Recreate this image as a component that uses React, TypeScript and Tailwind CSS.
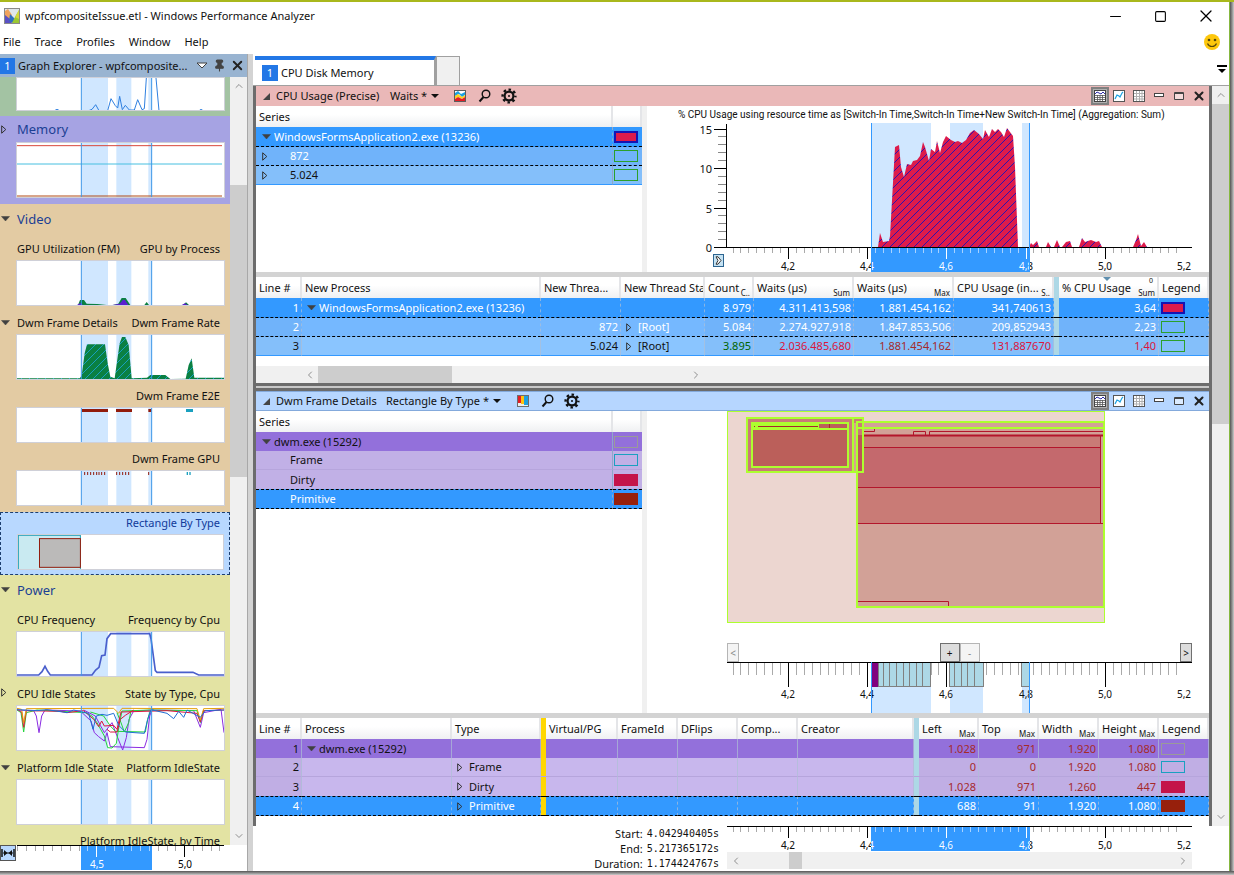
import type { ReactNode } from 'react';
import { ChevronDown, ChevronLeft, ChevronRight, ChevronUp, Minus, Pin, Square, X } from 'lucide-react';

type Point = [number, number];

const toPoints = (points: Point[]) => points.map((p) => p.join(',')).join(' ');

/* ---------- small drawings ---------- */

function AppLogo() {
  return (
    <svg width="16" height="16" viewBox="0 0 16 16">
      <rect width="16" height="16" fill="#8a8a8a" />
      <rect x="1" y="1" width="14" height="14" fill="#dfe6ea" />
      <path d="M1 3l3-2 4 6-3 6-4-5z" fill="#f0a35c" />
      <path d="M1 7l5 4 2 4H1z" fill="#5a4fc4" />
      <path d="M6 6l5 5-2 4-4-2z" fill="#2f6fc0" />
      <path d="M15 2v13H8l3-6z" fill="#9bc832" />
      <path d="M15 2l-4 7 4 2z" fill="#d3d83c" />
    </svg>
  );
}

function Smiley() {
  return (
    <svg width="16" height="16" viewBox="0 0 16 16">
      <circle cx="8" cy="8" r="8" fill="#fdc70c" />
      <circle cx="5" cy="6" r="1.3" fill="#55460a" />
      <circle cx="11" cy="6" r="1.3" fill="#55460a" />
      <path d="M3.5 9.500c1.800 4 7.200 4 9 0" fill="none" stroke="#55460a" strokeWidth="1.2" />
    </svg>
  );
}

function Expander({ open }: { open: boolean }) {
  return open ? (
    <svg width="9" height="6" viewBox="0 0 9 6" className="shrink-0">
      <path d="M0.500 0.500h8L4.500 5z" fill="#404040" stroke="#404040" strokeWidth="0.500" />
    </svg>
  ) : (
    <svg width="6" height="9" viewBox="0 0 6 9" className="shrink-0">
      <path d="M0.700 0.800v7.400L4.800 4.500z" fill="none" stroke="#303030" />
    </svg>
  );
}

function SearchIcon() {
  return (
    <svg width="14" height="14" viewBox="0 0 14 14" fill="none" stroke="#111">
      <circle cx="8" cy="5" r="3.800" strokeWidth="1.400" />
      <path d="M5.500 8L1.500 12.500" strokeWidth="2" />
    </svg>
  );
}

function GearIcon() {
  return (
    <svg width="16" height="16" viewBox="0 0 16 16" fill="none" stroke="#111">
      <circle cx="8" cy="8" r="4.400" strokeWidth="2.200" />
      <circle cx="8" cy="8" r="6.400" strokeWidth="2.400" strokeDasharray="2.500 2.526" strokeDashoffset="1.250" />
      <circle cx="8" cy="8" r="1" fill="#111" stroke="none" />
    </svg>
  );
}

function GraphPresetIcon() {
  return (
    <svg width="12" height="12" viewBox="0 0 12 12">
      <rect width="12" height="12" fill="#5c5c5c" />
      <rect x="1" y="1" width="10" height="10" fill="#fff" />
      <path d="M1 3l3-2 3 3 2-1 2-1v3L8 7 5 4 1 6z" fill="#1ba1e2" />
      <path d="M1 6l3-2 4 3 3-2v2L8 9 4 7 1 9z" fill="#ffd21c" />
      <path d="M1 9l3-2 4 2 3-2v4H1z" fill="#e51c24" />
    </svg>
  );
}

function BarPresetIcon() {
  return (
    <svg width="12" height="12" viewBox="0 0 12 12">
      <rect width="12" height="12" fill="#6d6d6d" />
      <rect x="1" y="1" width="10" height="10" fill="#eee" />
      <rect x="1" y="1" width="3" height="7" fill="#e51c24" />
      <rect x="4" y="1" width="3" height="8" fill="#ffc20e" />
      <rect x="7" y="1" width="4" height="9" fill="#1ba1e2" />
    </svg>
  );
}

function ChartTableIcon() {
  return (
    <svg width="12" height="12" viewBox="0 0 12 12">
      <rect x="0.500" y="0.500" width="11" height="11" fill="#fff" stroke="#444" />
      <path d="M1 4l2-2 2 1 2 1 2-2 2 2" fill="none" stroke="#2c2ca8" />
      <path d="M1 5.500h10M1 7.500h10M1 9.500h10M3.500 5v6M6 5v6M8.500 5v6" stroke="#555" strokeWidth="0.800" />
    </svg>
  );
}

function ChartIcon() {
  return (
    <svg width="12" height="12" viewBox="0 0 12 12">
      <rect x="0.500" y="0.500" width="11" height="11" fill="#fff" stroke="#555" />
      <path d="M2 9l2-4 2 1 1 1 2-4 1-1" fill="none" stroke="#1ba1e2" strokeWidth="1.200" />
    </svg>
  );
}

function TableIcon() {
  return (
    <svg width="12" height="12" viewBox="0 0 12 12">
      <rect x="0.500" y="0.500" width="11" height="11" fill="#fff" stroke="#555" />
      <path d="M1 3.500h10M1 6.500h10M1 9h10M3.500 1v10M6.500 1v10M9 1v10" stroke="#b0b0b0" />
    </svg>
  );
}

/* ---------- scroll bars ---------- */

function VerticalScroll({ lead, thumb }: { lead: string; thumb: string }) {
  return (
    <div className="flex w-[17px] shrink-0 flex-col items-center bg-[#f0f0f0] text-[#8f8f8f]">
      <ChevronUp size={12} className="my-[3px] shrink-0" />
      <div className={lead} />
      <div className={`w-full shrink-0 bg-[#cdcdcd] ${thumb}`} />
      <div className="flex-1" />
      <ChevronDown size={12} className="my-[3px] shrink-0" />
    </div>
  );
}

/* ---------- left panel ---------- */

function Thumb({ h, bands = true, children }: { h: number; bands?: boolean; children?: ReactNode }) {
  return (
    <div className="ml-4 mr-[5px] border border-[#cfd0d8] bg-white">
      <svg viewBox={`0 0 621 ${(h - 2) * 3}`} className="block h-auto w-full">
        {bands && (
          <g fill="#d0e7ff">
            <rect x="195" width="78" height="200" />
            <rect x="298" width="45" height="200" />
            <rect x="394" width="10" height="200" />
          </g>
        )}
        {children}
        {bands && <path d="M193 0V200M404 0V200" stroke="#3c96e8" strokeWidth="3" />}
      </svg>
    </div>
  );
}

function GroupHeading({ open, children }: { open: boolean; children: ReactNode }) {
  return (
    <h2 className="relative flex h-[26px] items-center pl-[17px] text-[13px] text-[#1b3f94]">
      <span className="absolute left-[1px]">
        <Expander open={open} />
      </span>
      {children}
    </h2>
  );
}

function GraphLabel({ title, preset, open }: { title?: string; preset: string; open?: boolean }) {
  return (
    <div
      className={`relative flex items-end justify-between whitespace-nowrap pb-[3px] pl-[17px] pr-[10px] leading-4 ${
        title ? 'h-7' : 'h-[27px]'
      }`}
    >
      {open !== undefined && (
        <span className="absolute bottom-2 left-[1px]">
          <Expander open={open} />
        </span>
      )}
      <span>{title}</span>
      <span>{preset}</span>
    </div>
  );
}

const idleStates: { color: string; points: Point[] }[] = [
  { color: '#8a2be2', points: [[0, 12], [50, 14], [58, 30], [66, 80], [74, 30], [84, 12], [190, 15], [222, 45], [232, 80], [245, 92], [262, 105], [270, 80], [280, 122], [382, 125], [390, 100], [398, 30], [405, 12], [530, 14], [550, 64], [560, 20], [612, 10], [621, 80]] },
  { color: '#8a2be2', points: [[200, 12], [235, 30], [250, 58], [262, 80], [285, 50], [300, 90], [317, 132], [328, 95], [336, 40], [350, 15], [410, 12]] },
  { color: '#24d63c', points: [[0, 12], [12, 20], [20, 78], [28, 20], [60, 12], [205, 20], [225, 30], [240, 50], [262, 90], [272, 125], [285, 126], [298, 112], [306, 60], [315, 15], [400, 12], [540, 14], [550, 50], [560, 12]] },
  { color: '#24d63c', points: [[220, 18], [260, 30], [280, 60], [295, 76], [385, 78], [392, 40], [400, 14]] },
  { color: '#24d63c', points: [[300, 20], [312, 50], [322, 78], [335, 50], [342, 14]] },
  { color: '#dc143c', points: [[0, 10], [14, 18], [20, 64], [28, 14], [130, 16], [150, 20], [200, 14], [230, 40], [245, 62], [254, 45], [262, 60], [290, 58], [300, 70], [312, 18], [450, 14], [540, 22], [550, 48], [560, 14], [621, 12]] },
  { color: '#dc143c', points: [[270, 70], [280, 78], [300, 78], [310, 40], [325, 28], [350, 12]] },
  { color: '#e3a008', points: [[0, 7], [14, 10], [20, 50], [28, 8], [290, 7], [305, 22], [315, 7], [540, 8], [550, 42], [560, 8], [621, 7]] },
  { color: '#1f6fd4', points: [[0, 11], [60, 14], [90, 11], [150, 20], [170, 12], [215, 22], [228, 70], [238, 30], [255, 25], [270, 28], [290, 22], [305, 58], [325, 78], [382, 82], [392, 40], [402, 11], [450, 22], [470, 38], [485, 16], [500, 34], [510, 12], [550, 34], [565, 14], [621, 12]] },
];

function GraphExplorer() {
  return (
    <aside className="flex w-[247px] shrink-0 flex-col">
      <div className="flex h-[23px] shrink-0 items-center bg-[#99b4d1]">
        <span className="flex h-4 w-[15px] items-center justify-center bg-[#2277e6] text-white">1</span>
        <span className="ml-[3px] w-[178px] whitespace-nowrap">Graph Explorer - wpfcomposite...</span>
        <button aria-label="Panel menu" className="w-[17px]">
          <svg width="12" height="7" viewBox="0 0 12 7">
            <path d="M1 1h10L6 6z" fill="#fff" stroke="#404040" />
          </svg>
        </button>
        <button aria-label="Pin panel" className="w-[17px]">
          <Pin size={13} fill="#444" color="#444" />
        </button>
        <button aria-label="Close panel">
          <X size={15} color="#222" strokeWidth={3} />
        </button>
      </div>

      <div className="flex h-0 grow overflow-hidden">
        <div className="min-w-0 flex-1 overflow-hidden">
          <section className="bg-[#a3c3a3] pb-[5px]">
            <Thumb h={34}>
              <polyline
                points="0,110 110,99 120,94 130,99 215,98 225,94 236,80 246,98 272,98 282,62 295,83 302,90 308,55 316,95 325,82 337,96 352,96 362,65 375,95 382,92 388,0"
                fill="none"
                stroke="#2f80e0"
                strokeWidth="3"
              />
              <polyline points="417,0 426,98 545,99 552,94 560,99" fill="none" stroke="#2f80e0" strokeWidth="3" />
            </Thumb>
          </section>

          <section className="bg-[#a6a3e3] pb-[6px]">
            <GroupHeading open={false}>Memory</GroupHeading>
            <Thumb h={56}>
              <path d="M0 8H615" stroke="#d9483b" strokeWidth="3" />
              <path d="M0 63H615" stroke="#46bfe0" strokeWidth="3" />
              <path d="M0 159H615" stroke="#b04a14" strokeWidth="3" />
            </Thumb>
          </section>

          <section className="bg-[#e3cba3] pb-[6px] pt-[2px]">
            <GroupHeading open>Video</GroupHeading>
            <GraphLabel title="GPU Utilization (FM)" preset="GPU by Process" />
            <Thumb h={46}>
              <path d="M183 132l6-15h12l8 11 32 1 28 3zM288 132l16-4 10-17h12l14 21zM382 132l7-9 7 9zM498 132l9-8 9 8z" fill="#0a8043" />
              <path d="M180 132l10-6 8 6zM286 132l22-4 10-12 6 1 10 15zM494 132l10-5 8 5z" fill="#5a1fd0" />
            </Thumb>
            <GraphLabel title="Dwm Frame Details" preset="Dwm Frame Rate" open />
            <Thumb h={46}>
              <defs>
                <pattern id="hatch-teal" width="24" height="24" patternUnits="userSpaceOnUse">
                  <rect width="24" height="24" fill="#0a8043" />
                  <path d="M0 24L24 0" stroke="#18a0c0" strokeWidth="3" />
                </pattern>
              </defs>
              <polygon
                points="0,132 0,130 188,130 194,122 203,55 210,28 264,28 272,85 280,125 293,130 300,80 308,25 315,6 325,6 335,30 344,130 390,128 400,120 445,120 460,132 506,131 515,90 524,70 532,128 621,128 621,132"
                fill="url(#hatch-teal)"
              />
            </Thumb>
            <GraphLabel preset="Dwm Frame E2E" />
            <Thumb h={36}>
              <path d="M195 3h78v9h-78zM297 3h48v9h-48zM394 3h9v9h-9z" fill="#921c0c" />
              <rect x="507" y="3" width="21" height="9" fill="#1aa0bf" />
            </Thumb>
            <GraphLabel preset="Dwm Frame GPU" />
            <Thumb h={36}>
              <path
                d="M203 3v9M212 3v9M221 3v9M230 3v9M239 3v9M246 3v9M254 3v9M263 3v9M299 3v9M308 3v9M317 3v9M326 3v9M335 3v9M395 3v9"
                stroke="#921c0c"
                strokeWidth="3"
              />
              <path d="M511 3v9M519 3v9" stroke="#1aa0bf" strokeWidth="4" />
            </Thumb>
          </section>

          <section className="border border-dashed border-[#1d3f70] bg-[#b8d8ff] pb-1">
            <div className="h-[21px] pr-[9px] text-right leading-5 text-[#103a9a]">Rectangle By Type</div>
            <Thumb h={36} bands={false}>
              <rect x="1" y="1" width="188" height="104" fill="#c9eaf1" stroke="#22a0b8" strokeWidth="3" />
              <rect x="65" y="11" width="124" height="87" fill="#bbbab9" stroke="#921c0c" strokeWidth="3" />
            </Thumb>
          </section>

          <section className="bg-[#e3e3a3] pt-[2px]">
            <GroupHeading open>Power</GroupHeading>
            <GraphLabel title="CPU Frequency" preset="Frequency by Cpu" />
            <Thumb h={46}>
              <polyline
                points="0,129 65,129 75,119 84,103 92,118 100,129 225,129 236,114 246,106 254,71 264,69 270,20 281,5 398,5 402,20 415,116 420,121 528,121 545,129 621,129"
                fill="none"
                stroke="#4a5fcc"
                strokeWidth="5"
              />
            </Thumb>
            <GraphLabel title="CPU Idle States" preset="State by Type, Cpu" open={false} />
            <Thumb h={46}>
              {idleStates.map((state, i) => (
                <polyline key={i} points={toPoints(state.points)} fill="none" stroke={state.color} strokeWidth="3" />
              ))}
            </Thumb>
            <GraphLabel title="Platform Idle State" preset="Platform IdleState" open />
            <Thumb h={46} />
            <GraphLabel preset="Platform IdleState, by Time" />
          </section>
        </div>
        <VerticalScroll lead="h-[90px] shrink-0" thumb="h-[292px]" />
      </div>

      <div className="flex h-[26px] shrink-0 items-start">
        <button aria-label="Fit timeline" className="h-4 w-4 border border-[#555] bg-[#b8d8ff]">
          <svg viewBox="0 0 14 14" className="block w-full">
            <path d="M1 3v8M13 3v8" stroke="#111" strokeWidth="1.500" />
            <path d="M2 7h10" stroke="#111" />
            <path d="M3 4l3.500 3L3 10zM11 4L7.500 7l3.500 3z" fill="#111" />
          </svg>
        </button>
        <svg viewBox="0 0 231 26" className="block w-[231px]">
          <rect x="65" width="71" height="25" fill="#3399ff" />
          {Array.from({ length: 24 }, (_, i) => {
            const x = Math.round(1 + i * 8.8) + 0.5;
            const major = i === 9 || i === 19;
            const selected = x > 65 && x < 136;
            return (
              <path
                key={i}
                d={`M${x} 0V${major ? 12 : 6}`}
                stroke={selected ? (major ? '#fff' : '#a8d2ff') : major ? '#000' : '#aaa'}
              />
            );
          })}
          <path d="M1 0.500H208" stroke="#000" />
          <text x="81" y="23" fontSize="10" fill="#fff" textAnchor="middle">4,5</text>
          <text x="169" y="23" fontSize="10" textAnchor="middle">5,0</text>
        </svg>
      </div>
    </aside>
  );
}

/* ---------- right side: headers and tables ---------- */

function PanelHeader({
  title,
  titleWidth,
  preset,
  presetWidth,
  icon,
  className,
}: {
  title: string;
  titleWidth: string;
  preset: string;
  presetWidth: string;
  icon: ReactNode;
  className: string;
}) {
  return (
    <div className={`flex h-5 items-center ${className}`}>
      <button aria-label="Collapse panel" className="w-5 pl-[7px]">
        <svg width="7" height="7" viewBox="0 0 7 7">
          <path d="M7 0v7H0z" fill="#444" />
        </svg>
      </button>
      <h3 className={`whitespace-nowrap ${titleWidth}`}>{title}</h3>
      <button className={`flex items-center gap-1 whitespace-nowrap text-left ${presetWidth}`}>
        {preset}
        <svg width="8" height="4" viewBox="0 0 8 4">
          <path d="M0 0h8L4 4z" fill="#111" />
        </svg>
      </button>
      <button aria-label="Graph type" className="flex w-6 justify-center">{icon}</button>
      <button aria-label="Search" className="flex w-[26px] justify-center">
        <SearchIcon />
      </button>
      <button aria-label="View editor" className="flex w-[22px] justify-center">
        <GearIcon />
      </button>
      <div className="ml-auto flex">
        <button aria-label="Graph and table" className="flex h-[18px] w-[18px] items-center justify-center border-2 border-[#808080] bg-[#b0b0b0]">
          <ChartTableIcon />
        </button>
        <button aria-label="Graph only" className="flex w-5 items-center justify-center">
          <ChartIcon />
        </button>
        <button aria-label="Table only" className="flex w-5 items-center justify-center">
          <TableIcon />
        </button>
        <button aria-label="Minimize panel" className="flex w-5 items-center justify-center">
          <svg width="12" height="12" viewBox="0 0 12 12">
            <rect x="1.500" y="3.500" width="9" height="3" fill="#fff" stroke="#444" />
          </svg>
        </button>
        <button aria-label="Maximize panel" className="flex w-5 items-center justify-center">
          <svg width="12" height="12" viewBox="0 0 12 12">
            <path d="M1.500 2.500h9v7h-9zM1.500 3.500h9" fill="#fff" fillOpacity="0.500" stroke="#444" />
          </svg>
        </button>
        <button aria-label="Close panel" className="flex w-5 items-center justify-center">
          <X size={14} color="#222" strokeWidth={3.5} />
        </button>
      </div>
    </div>
  );
}

const headCell =
  'overflow-hidden whitespace-nowrap border-r-2 border-[#e4e5e8] bg-linear-to-b from-white from-40% to-[#eff0f2] px-[3px] text-left font-normal';

const swatches = {
  exe: 'border-2 border-[#1414b4] bg-[#dc1b4c]',
  green: 'border border-[#2ba02b]',
  gray: 'border border-[#9a9a9a]',
  teal: 'border border-[#1aa0c0]',
  dirty: 'bg-[#c4144a]',
  primitive: 'bg-[#97200c]',
};

function Swatch({ kind }: { kind: keyof typeof swatches }) {
  return <div className={`h-3 w-6 ${swatches[kind]}`} />;
}

interface SeriesRow {
  label: string;
  depth: number;
  open?: boolean;
  swatch: keyof typeof swatches;
  className: string;
}

function SeriesTable({ rows }: { rows: SeriesRow[] }) {
  return (
    <div className="w-[391px] shrink-0 border-r-[5px] border-[#f0f0f0]">
      <table className="w-full table-fixed border-separate border-spacing-0">
        <colgroup>
          <col />
          <col className="w-[29px]" />
        </colgroup>
        <thead>
          <tr className="h-[21px]">
            <th className={headCell}>Series</th>
            <th aria-label="Color" className={headCell} />
          </tr>
        </thead>
        <tbody>
          {rows.map((row) => (
            <tr key={row.label} className={row.className}>
              <td className="border-r border-[#8fa8c8]">
                <div className="flex items-center pl-[6px]">
                  <span className="flex w-3 shrink-0">{row.open !== undefined && <Expander open={row.open} />}</span>
                  <span className={row.depth ? 'pl-4' : ''}>{row.label}</span>
                </div>
              </td>
              <td className="pl-px">
                <Swatch kind={row.swatch} />
              </td>
            </tr>
          ))}
        </tbody>
      </table>
    </div>
  );
}

interface Column {
  name: string;
  width: string;
  agg?: string;
  bar?: string;
  sorted?: boolean;
}

interface Cell {
  text?: string;
  open?: boolean;
  right?: boolean;
  className?: string;
  swatch?: keyof typeof swatches;
}

function DataTable({ columns, rows }: { columns: Column[]; rows: { className: string; cells: Cell[] }[] }) {
  return (
    <table className="w-full table-fixed border-separate border-spacing-0">
      <colgroup>
        {columns.map((column, i) => (
          <col key={i} className={column.width} />
        ))}
      </colgroup>
      <thead>
        <tr className="h-[21px]">
          {columns.map((column, i) =>
            column.bar ? (
              <th key={i} aria-label="Divider" className={column.bar} />
            ) : (
              <th key={i} className={`${headCell} relative ${column.sorted ? 'to-[#dcf1fb]' : ''}`}>
                {column.name}
                {column.agg && (
                  <span className="absolute bottom-0 right-[2px] text-[8px] leading-[10px]">{column.agg}</span>
                )}
                {column.sorted && (
                  <>
                    <span className="absolute right-1 top-0 text-[7px] leading-2">0</span>
                    <svg className="absolute left-11 top-0" width="8" height="4" viewBox="0 0 8 4">
                      <path d="M0 0h8L4 4z" fill="#5f8fae" />
                    </svg>
                  </>
                )}
              </th>
            ),
          )}
        </tr>
      </thead>
      <tbody>
        {rows.map((row, r) => (
          <tr key={r} className={row.className}>
            {row.cells.map((cell, i) => {
              if (columns[i].bar) return <td key={i} className={columns[i].bar} />;
              return (
                <td
                  key={i}
                  className={`overflow-hidden whitespace-nowrap border-r border-[#aebfd6]/70 px-[2px] ${
                    cell.right ? 'text-right' : ''
                  } ${cell.className ?? ''}`}
                >
                  {cell.open !== undefined ? (
                    <div className="flex items-center pl-[3px]">
                      <span className="flex w-3 shrink-0">
                        <Expander open={cell.open} />
                      </span>
                      {cell.text}
                    </div>
                  ) : cell.swatch ? (
                    <Swatch kind={cell.swatch} />
                  ) : (
                    cell.text
                  )}
                </td>
              );
            })}
          </tr>
        ))}
      </tbody>
    </table>
  );
}

/* ---------- right side: charts ---------- */

const MAJOR_LABELS = ['4,2', '4,4', '4,6', '4,8', '5,0', '5,2'];

function Ruler({ minor, major, selected }: { minor: number; major: number; selected: boolean }) {
  return (
    <g>
      {/* labels turn white exactly where the selection covers them */}
      <defs>
        <linearGradient id="ruler-ink" gradientUnits="userSpaceOnUse" x1="224" x2="383" y1="0" y2="0">
          <stop offset="0" stopColor="#111" />
          <stop offset="0" stopColor="#fff" />
          <stop offset="1" stopColor="#fff" />
          <stop offset="1" stopColor="#111" />
        </linearGradient>
      </defs>
      {selected && <rect x="224" width="159" height="25" fill="#3399ff" />}
      {Array.from({ length: 57 }, (_, i) => {
        const x = Math.round(85.500 + i * 7.920) + 0.5;
        const isMajor = i % 10 === 7;
        const inside = selected && x > 224 && x < 383;
        return (
          <path
            key={i}
            d={`M${x} 0V${isMajor ? major : minor}`}
            stroke={inside ? (isMajor ? '#fff' : '#a8d2ff') : isMajor ? '#000' : '#aaa'}
          />
        );
      })}
      <path d="M80 0.500H545" stroke="#000" />
      {MAJOR_LABELS.map((label, i) => (
        <text
          key={label}
          x={Math.round(141 + i * 79.200)}
          y={major + 11}
          fontSize="10"
          textAnchor="middle"
          fill={selected ? 'url(#ruler-ink)' : '#111'}
        >
          {label}
        </text>
      ))}
    </g>
  );
}

const usage: Point[] = [
  [231, 141], [233, 127], [236, 136], [242, 135], [243, 130], [248, 41], [252, 39], [254, 61], [257, 71], [260, 58],
  [264, 59], [266, 55], [270, 54], [273, 50], [276, 36], [278, 41], [282, 55], [284, 43], [288, 46], [290, 35],
  [293, 47], [296, 36], [299, 30], [304, 34], [308, 36], [311, 35], [315, 37], [319, 34], [323, 27], [327, 24],
  [332, 28], [336, 33], [338, 24], [342, 31], [345, 23], [348, 26], [351, 23], [354, 26], [357, 31], [360, 22],
  [363, 26], [366, 30], [368, 61], [371, 141], [382, 141], [384, 137], [386, 139], [390, 135], [392, 141],
  [399, 141], [401, 136], [404, 141], [407, 141], [410, 134], [413, 141], [415, 141], [419, 136], [423, 135],
  [425, 141], [432, 141], [435, 132], [438, 136], [444, 134], [449, 136], [452, 135], [455, 141], [486, 141],
  [489, 134], [491, 128], [494, 140], [497, 136], [500, 141],
];

function UsageChart() {
  return (
    <div className="relative min-w-0 flex-1">
      <svg viewBox="0 0 562 166" className="block w-full">
        <defs>
          <pattern id="hatch-blue" width="8" height="8" patternUnits="userSpaceOnUse">
            <rect width="8" height="8" fill="#dc1b4c" />
            <path d="M-1 1L1 -1M0 8L8 0M7 9L9 7" stroke="#2a12b0" />
          </pattern>
        </defs>
        <text x="31" y="12" fontSize="10" fill="#111" className="font-[Roboto,sans-serif]">
          % CPU Usage using resource time as [Switch-In Time,Switch-In Time+New Switch-In Time] (Aggregation: Sum)
        </text>
        <g fill="#d0e7ff">
          <rect x="224" y="17" width="60" height="124" />
          <rect x="303" y="17" width="33" height="124" />
          <rect x="375" y="17" width="8" height="124" />
        </g>
        <polygon points={toPoints(usage)} fill="url(#hatch-blue)" />
        {Array.from({ length: 16 }, (_, i) => {
          const y = Math.round(141 - i * 7.900) + 0.5;
          return i % 5 === 0 ? (
            <g key={i}>
              <path d={`M67 ${y}H80`} stroke="#000" />
              <text x="65" y={y + 4} fontSize="11" textAnchor="end" fill="#111">
                {i}
              </text>
            </g>
          ) : (
            <path key={i} d={`M71 ${y}H80`} stroke="#888" />
          );
        })}
        <path d="M79.500 18V141" stroke="#000" />
        <g transform="translate(0 141)">
          <Ruler minor={6} major={12} selected />
        </g>
        <path d="M224.500 17V166M382.500 17V166" stroke="#3399ff" />
      </svg>
      <button
        aria-label="Expand axis"
        className="absolute bottom-[5px] left-[66px] flex h-[13px] w-[11px] items-center justify-center border border-[#2c6490] bg-[#c5e2f3]"
      >
        <svg width="7" height="9" viewBox="0 0 7 9">
          <path d="M1 0.800h2L6 4.500 3 8.200H1l2-3.700z" fill="#fff" stroke="#333" />
        </svg>
      </button>
    </div>
  );
}

function RectangleChart() {
  const blocks = [231, 236, 242, 249, 256, 262, 269, 275];
  const blocks2 = [303, 308, 315, 321, 328];
  return (
    <div className="min-w-0 flex-1">
      <svg viewBox="0 0 562 232" className="block w-full">
        <rect x="80.500" y="0.500" width="377" height="211" fill="#ecd6d0" stroke="#adff2f" />
        {/* large window */}
        <rect x="210" y="12" width="247" height="183" fill="#d2a197" />
        <rect x="210.500" y="24.500" width="243" height="88" fill="#c97b76" stroke="#b3162b" />
        <rect x="210.500" y="36.500" width="243" height="40" fill="#c4696d" stroke="#b3162b" />
        <path d="M210 24.500H457" stroke="#b3162b" strokeWidth="2" />
        <path d="M453 112.500H457M211 20.500H227.500V18M266.500 24V20.500H278.500V24M282.500 24V20.500H457M211 190.500H301.500V195" fill="none" stroke="#b3162b" />
        {/* small window */}
        <rect x="100" y="7" width="115" height="54" fill="#c97b76" />
        <rect x="207" y="12" width="3" height="49" fill="#d9a08f" />
        <rect x="211" y="24" width="4" height="37" fill="#bb5358" />
        <rect x="105" y="13" width="96" height="43" fill="#bb5f5a" />
        <g fill="none" stroke="#adff2f" strokeWidth="2">
          <rect x="100" y="7" width="116" height="54" />
          <rect x="105" y="12" width="96" height="44" />
          <path d="M105 18H202M206 7V61M210 11H457V196H210ZM210 17H457" />
          <path d="M106 14.500H172" strokeWidth="5" />
        </g>
        <path d="M111 15.500H171M107 15.500H108M182.500 13V17" stroke="#a52a2a" />
      </svg>
      <div className="flex h-[19px] justify-between pl-20 pr-[17px] text-[10px] leading-4">
        <button disabled className="w-3 border border-[#b5b5b5] bg-[#f4f4f4] text-[#888]">&lt;</button>
        <div className="flex">
          <button className="w-5 border border-[#707070] bg-[#ddd]">+</button>
          <button disabled className="w-5 border border-[#b5b5b5] bg-[#f4f4f4] text-[#888]">-</button>
        </div>
        <button className="w-3 border border-[#707070] bg-[#ddd]">&gt;</button>
      </div>
      <svg viewBox="0 0 562 51" className="block w-full">
        <path d="M224 0h60v51h-60zM303 0h33v51h-33zM375 0h8v51h-8z" fill="#d0e7ff" />
        <Ruler minor={13} major={25} selected={false} />
        <g fill="#add8e6" stroke="#808080">
          {blocks.map((x, i) => (
            <rect key={x} x={x + 0.5} y="0" width={(blocks[i + 1] ?? 283) - x} height="24.500" />
          ))}
          {blocks2.map((x, i) => (
            <rect key={x} x={x - 0.5} y="0" width={(blocks2[i + 1] ?? 337) - x} height="24.500" />
          ))}
          <rect x="374.500" y="0" width="8" height="24.500" />
        </g>
        <rect x="224" width="7" height="25" fill="#800080" />
        <path d="M80 0.500H545" stroke="#000" />
        <path d="M224.500 0V51M382.500 0V51" stroke="#3399ff" />
      </svg>
    </div>
  );
}

/* ---------- data ---------- */

const cpuSeries: SeriesRow[] = [
  { label: 'WindowsFormsApplication2.exe (13236)', depth: 0, open: true, swatch: 'exe', className: 'h-5 bg-[#3399ff] text-white [&>td]:border-b [&>td]:border-dashed [&>td]:border-b-black' },
  { label: '872', depth: 1, open: false, swatch: 'green', className: 'h-[19px] bg-[#70b3fa] text-white [&>td]:border-b [&>td]:border-dashed [&>td]:border-b-black' },
  { label: '5.024', depth: 1, open: false, swatch: 'green', className: 'h-[19px] bg-[#84bffa] [&>td]:border-b [&>td]:border-b-[#3399ff]' },
];

const dwmSeries: SeriesRow[] = [
  { label: 'dwm.exe (15292)', depth: 0, open: true, swatch: 'gray', className: 'h-[19px] bg-[#9370db]' },
  { label: 'Frame', depth: 1, swatch: 'teal', className: 'h-[19px] bg-[#c1b0e6] [&>td]:border-b [&>td]:border-b-[#b6a5dc]' },
  { label: 'Dirty', depth: 1, swatch: 'dirty', className: 'h-[19px] bg-[#c1b0e6]' },
  { label: 'Primitive', depth: 1, swatch: 'primitive', className: 'h-5 bg-[#3399ff] text-white [&>td]:border-y [&>td]:border-dashed [&>td]:border-y-black' },
];

const cpuColumns: Column[] = [
  { name: 'Line #', width: 'w-[46px]' },
  { name: 'New Process', width: '' },
  { name: 'New Threa...', width: 'w-[80px]' },
  { name: 'New Thread Sta', width: 'w-[84px]' },
  { name: 'Count', width: 'w-[49px]', agg: 'C..' },
  { name: 'Waits (µs)', width: 'w-[100px]', agg: 'Sum' },
  { name: 'Waits (µs)', width: 'w-[100px]', agg: 'Max' },
  { name: 'CPU Usage (in...', width: 'w-[100px]', agg: 'S..' },
  { name: '', width: 'w-[5px]', bar: 'bg-[#add8e6]' },
  { name: '% CPU Usage', width: 'w-[100px]', agg: 'Sum', sorted: true },
  { name: 'Legend', width: 'w-[50px]' },
];

const cpuRows = [
  {
    className: 'h-5 bg-[#3399ff] text-white [&>td]:border-b [&>td]:border-dashed [&>td]:border-b-black',
    cells: [
      { text: '1', right: true }, { text: 'WindowsFormsApplication2.exe (13236)', open: true }, {}, {},
      { text: '8.979', right: true }, { text: '4.311.413,598', right: true }, { text: '1.881.454,162', right: true },
      { text: '341,740613', right: true }, {}, { text: '3,64', right: true }, { swatch: 'exe' },
    ] as Cell[],
  },
  {
    className: 'h-[19px] bg-[#70b3fa] text-white [&>td]:border-b [&>td]:border-dashed [&>td]:border-b-black',
    cells: [
      { text: '2', right: true }, { className: 'bg-[#75b8ff]' }, { text: '872', right: true, className: 'bg-[#75b8ff]' },
      { text: '[Root]', open: false, className: 'bg-[#75b8ff]' }, { text: '5.084', right: true },
      { text: '2.274.927,918', right: true }, { text: '1.847.853,506', right: true }, { text: '209,852943', right: true },
      {}, { text: '2,23', right: true }, { swatch: 'green' },
    ] as Cell[],
  },
  {
    className: 'h-[19px] bg-[#84bffa] [&>td]:border-b [&>td]:border-b-[#3399ff]',
    cells: [
      { text: '3', right: true }, { className: 'bg-[#8ac5ff]' }, { text: '5.024', right: true, className: 'bg-[#8ac5ff]' },
      { text: '[Root]', open: false, className: 'bg-[#8ac5ff]' }, { text: '3.895', right: true, className: 'text-[#006400]' },
      { text: '2.036.485,680', right: true, className: 'text-[#dc143c]' },
      { text: '1.881.454,162', right: true, className: 'text-[#a52a2a]' },
      { text: '131,887670', right: true, className: 'text-[#dc143c]' }, {},
      { text: '1,40', right: true, className: 'text-[#dc143c]' }, { swatch: 'green' },
    ] as Cell[],
  },
];

const dwmColumns: Column[] = [
  { name: 'Line #', width: 'w-[46px]' },
  { name: 'Process', width: 'w-[150px]' },
  { name: 'Type', width: 'w-[89px]' },
  { name: '', width: 'w-[5px]', bar: 'bg-[#ffd700]' },
  { name: 'Virtual/PG', width: 'w-[72px]' },
  { name: 'FrameId', width: 'w-[60px]' },
  { name: 'DFlips', width: 'w-[60px]' },
  { name: 'Comp...', width: 'w-[60px]' },
  { name: 'Creator', width: '' },
  { name: '', width: 'w-[5px]', bar: 'bg-[#add8e6]' },
  { name: 'Left', width: 'w-[60px]', agg: 'Max' },
  { name: 'Top', width: 'w-[60px]', agg: 'Max' },
  { name: 'Width', width: 'w-[60px]', agg: 'Max' },
  { name: 'Height', width: 'w-[60px]', agg: 'Max' },
  { name: 'Legend', width: 'w-[50px]' },
];

function dwmRow(line: string, process: Cell, type: Cell, values: string[], swatch: keyof typeof swatches, tint: string, ink: string): Cell[] {
  const blank = { className: tint };
  return [
    { text: line, right: true },
    { ...process, className: tint },
    { ...type, className: tint },
    {}, blank, blank, blank, blank, blank, {},
    ...values.map((text) => ({ text, right: true, className: ink })),
    { swatch },
  ];
}

const dwmRows = [
  {
    className: 'h-[19px] bg-[#9370db]',
    cells: dwmRow('1', { text: 'dwm.exe (15292)', open: true }, {}, ['1.028', '971', '1.920', '1.080'], 'gray', '', 'text-[#a52a2a]'),
  },
  {
    className: 'h-[19px] bg-[#c0aee4] [&>td]:border-b [&>td]:border-b-[#b6a5dc]',
    cells: dwmRow('2', {}, { text: 'Frame', open: false }, ['0', '0', '1.920', '1.080'], 'teal', 'bg-[#c8b7ed]', 'text-[#a52a2a]'),
  },
  {
    className: 'h-[19px] bg-[#c0aee4]',
    cells: dwmRow('3', {}, { text: 'Dirty', open: false }, ['1.028', '971', '1.260', '447'], 'dirty', 'bg-[#c8b7ed]', 'text-[#a52a2a]'),
  },
  {
    className: 'h-5 bg-[#3399ff] text-white [&>td]:border-y [&>td]:border-dashed [&>td]:border-y-black',
    cells: dwmRow('4', {}, { text: 'Primitive', open: false }, ['688', '91', '1.920', '1.080'], 'primitive', '', ''),
  },
];

const menuItems = ['File', 'Trace', 'Profiles', 'Window', 'Help'];

const times = [
  ['Start:', '4.042940405s'],
  ['End:', '5.217365172s'],
  ['Duration:', '1.174424767s'],
];

export default function App() {
  return (
    <div className="flex min-h-screen flex-col overflow-hidden bg-white font-['Noto_Sans','Open_Sans',sans-serif] text-[11px] leading-4 text-[#111]">
      <div className="h-[2px] bg-[#a9b81c]" />
      <div className="flex flex-1">
        <div className="flex min-w-0 flex-1 flex-col">
          <header>
            <div className="flex h-7 items-center pl-1">
              <AppLogo />
              <h1 className="ml-[5px] flex-1 whitespace-nowrap">wpfcompositeIssue.etl - Windows Performance Analyzer</h1>
              <button aria-label="Minimize" className="flex w-[45px] justify-center">
                <Minus size={17} color="#000" strokeWidth={1.5} />
              </button>
              <button aria-label="Maximize" className="flex w-[45px] justify-center">
                <Square size={13} color="#000" strokeWidth={2} />
              </button>
              <button aria-label="Close" className="flex w-[46px] justify-center">
                <X size={20} color="#000" strokeWidth={1.5} />
              </button>
            </div>
            <div className="flex h-6 items-center justify-between pl-[3px] pr-[9px]">
              <nav className="flex gap-[14px]">
                {menuItems.map((item) => (
                  <button key={item}>{item}</button>
                ))}
              </nav>
              <button aria-label="Feedback">
                <Smiley />
              </button>
            </div>
          </header>

          <div className="flex flex-1">
            <GraphExplorer />
            <div className="w-[6px] shrink-0 border-l border-[#a8a8a8] bg-[#d3d3d3]" />

            <main className="flex min-w-0 flex-1 flex-col">
              <div className="flex h-8 shrink-0 items-end border-b border-[#a0a0a0] pl-[2px]">
                <button className="flex h-[29px] w-[181px] items-center gap-[3px] border-r-2 border-t-4 border-r-[#a0a0a0] border-t-[#2277e6] bg-white pl-[7px]">
                  <span className="flex h-4 w-4 items-center justify-center bg-[#2277e6] text-white">1</span>
                  CPU Disk Memory
                </button>
                <button aria-label="New tab" className="h-[29px] w-6 border border-b-0 border-[#a0a0a0] bg-[#f0f0f0]" />
                <button aria-label="Tab list" className="mb-[11px] ml-auto mr-[2px]">
                  <svg width="10" height="9" viewBox="0 0 10 9">
                    <path d="M0 0h10v2H0zM1 4h8L5 8z" fill="#000" />
                  </svg>
                </button>
              </div>

              <div className="flex">
                <div className="min-w-0 flex-1 border-x-[3px] border-[#6c6c6c]">
                  <section>
                    <PanelHeader
                      title="CPU Usage (Precise)"
                      titleWidth="w-[114px]"
                      preset="Waits *"
                      presetWidth="w-[58px]"
                      icon={<GraphPresetIcon />}
                      className="bg-[#eab8b8]"
                    />
                    <div className="flex">
                      <SeriesTable rows={cpuSeries} />
                      <UsageChart />
                    </div>
                    <div className="h-[5px] bg-[#d3d3d3]" />
                    <DataTable columns={cpuColumns} rows={cpuRows} />
                    <div className="mt-[10px] flex h-[17px] items-center bg-[#f0f0f0] pl-12 text-[#8f8f8f]">
                      <ChevronLeft size={12} className="mr-[2px]" />
                      <div className="h-full w-[134px] bg-[#cdcdcd]" />
                      <ChevronRight size={12} className="ml-[238px]" />
                    </div>
                  </section>

                  <div className="h-2 border-y-[3px] border-[#6c6c6c] bg-[#c8c8c8]" />

                  <section className="pb-[10px]">
                    <PanelHeader
                      title="Dwm Frame Details"
                      titleWidth="w-[110px]"
                      preset="Rectangle By Type *"
                      presetWidth="w-[125px]"
                      icon={<BarPresetIcon />}
                      className="border-y border-[#84aadc] bg-[#b6d6ff]"
                    />
                    <div className="flex">
                      <SeriesTable rows={dwmSeries} />
                      <RectangleChart />
                    </div>
                    <div className="h-[5px] bg-[#d3d3d3]" />
                    <DataTable columns={dwmColumns} rows={dwmRows} />
                  </section>
                </div>
                <VerticalScroll lead="h-0" thumb="h-[320px]" />
              </div>

              <footer className="flex h-[45px] pl-[3px] pr-5">
                <dl className="w-[391px] shrink-0 pl-[238px]">
                  {times.map(([label, value]) => (
                    <div key={label} className="flex h-[15px] w-[225px] items-center justify-end gap-1">
                      <dt>{label}</dt>
                      <dd className="font-['DejaVu_Sans_Mono',monospace] text-[10px]">{value}</dd>
                    </div>
                  ))}
                </dl>
                <div className="min-w-0 flex-1">
                  <svg viewBox="0 0 562 26" className="block w-full">
                    <Ruler minor={6} major={12} selected />
                  </svg>
                  <div className="ml-20 mr-[17px] flex h-[17px] items-center bg-[#f0f0f0] pl-[3px] text-[#8f8f8f]">
                    <ChevronLeft size={12} />
                    <div className="ml-[47px] h-full w-[13px] bg-[#cdcdcd]" />
                    <ChevronRight size={12} className="ml-auto mr-[3px]" />
                  </div>
                </div>
              </footer>
            </main>
          </div>
        </div>
        <div className="w-[5px] shrink-0 border-l border-[#86b840] bg-linear-to-r from-[#555] to-[#ccc]" />
      </div>
      <div className="h-1 bg-linear-to-b from-[#555] to-[#ccc]" />
    </div>
  );
}
